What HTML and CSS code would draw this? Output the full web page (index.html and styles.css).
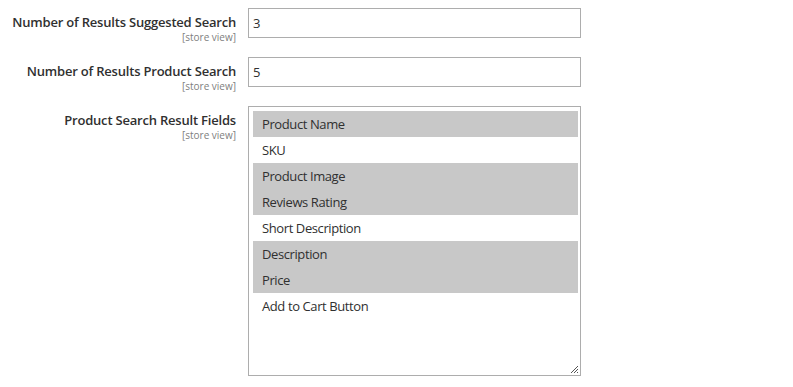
FILE: index.html
```html
<!DOCTYPE html>
<html lang="en">
<head>
    <meta charset="UTF-8">
    <title>Search Settings</title>
    <link rel="stylesheet" href="styles.css">
</head>
<body>
    <div class="config-form">
        <div class="field-row">
            <div class="field-label">
                <span class="label-text">Number of Results Suggested Search</span>
                <span class="scope">[store view]</span>
            </div>
            <div class="field-control">
                <div class="text-input">3</div>
            </div>
        </div>
        <div class="field-row">
            <div class="field-label">
                <span class="label-text">Number of Results Product Search</span>
                <span class="scope">[store view]</span>
            </div>
            <div class="field-control">
                <div class="text-input">5</div>
            </div>
        </div>
        <div class="field-row">
            <div class="field-label">
                <span class="label-text">Product Search Result Fields</span>
                <span class="scope">[store view]</span>
            </div>
            <div class="field-control">
                <div class="multi-select">
                    <div class="option selected">Product Name</div>
                    <div class="option">SKU</div>
                    <div class="option selected">Product Image</div>
                    <div class="option selected">Reviews Rating</div>
                    <div class="option">Short Description</div>
                    <div class="option selected">Description</div>
                    <div class="option selected">Price</div>
                    <div class="option">Add to Cart Button</div>
                    <svg class="resize-grip" width="9" height="9" viewBox="0 0 9 9">
                        <path d="M8 1 L1 8 M8 4 L4 8 M8 7 L7 8" stroke="#555" stroke-width="1"/>
                    </svg>
                </div>
            </div>
        </div>
    </div>
</body>
</html>
```

FILE: styles.css
```css
/* Admin config form */
body {
    margin: 0;
    background-color: #fff;
    font-family: "Open Sans", sans-serif;
    color: #303030;
}
.config-form {
    padding-top: 8px;
    display: flex;
    flex-direction: column;
    gap: 14px;
}
.field-row {
    display: flex;
    align-items: flex-start;
    gap: 12px;
}
.field-label {
    flex: none;
    width: 236px;
    display: flex;
    flex-direction: column;
    align-items: flex-end;
    padding-top: 5px;
    white-space: nowrap;
}
.label-text {
    font-size: 13px;
    font-weight: 600;
    letter-spacing: -0.2px;
    line-height: 18px;
}
.scope {
    font-size: 10px;
    line-height: 12px;
    color: #808080;
}
.field-control {
    flex: none;
    width: 333px;
}
.text-input {
    box-sizing: border-box;
    height: 30px;
    border: 1px solid #adadad;
    padding: 0 4px;
    font-size: 13px;
    line-height: 28px;
}
.multi-select {
    position: relative;
    box-sizing: border-box;
    height: 270px;
    border: 1px solid #adadad;
    padding: 4px 2px 4px 4px;
}
.option {
    height: 26px;
    line-height: 26px;
    padding-left: 9px;
    font-size: 13px;
    letter-spacing: -0.4px;
}
.option.selected {
    background-color: #c8c8c8;
}
.resize-grip {
    position: absolute;
    right: 1px;
    bottom: 1px;
}
```
